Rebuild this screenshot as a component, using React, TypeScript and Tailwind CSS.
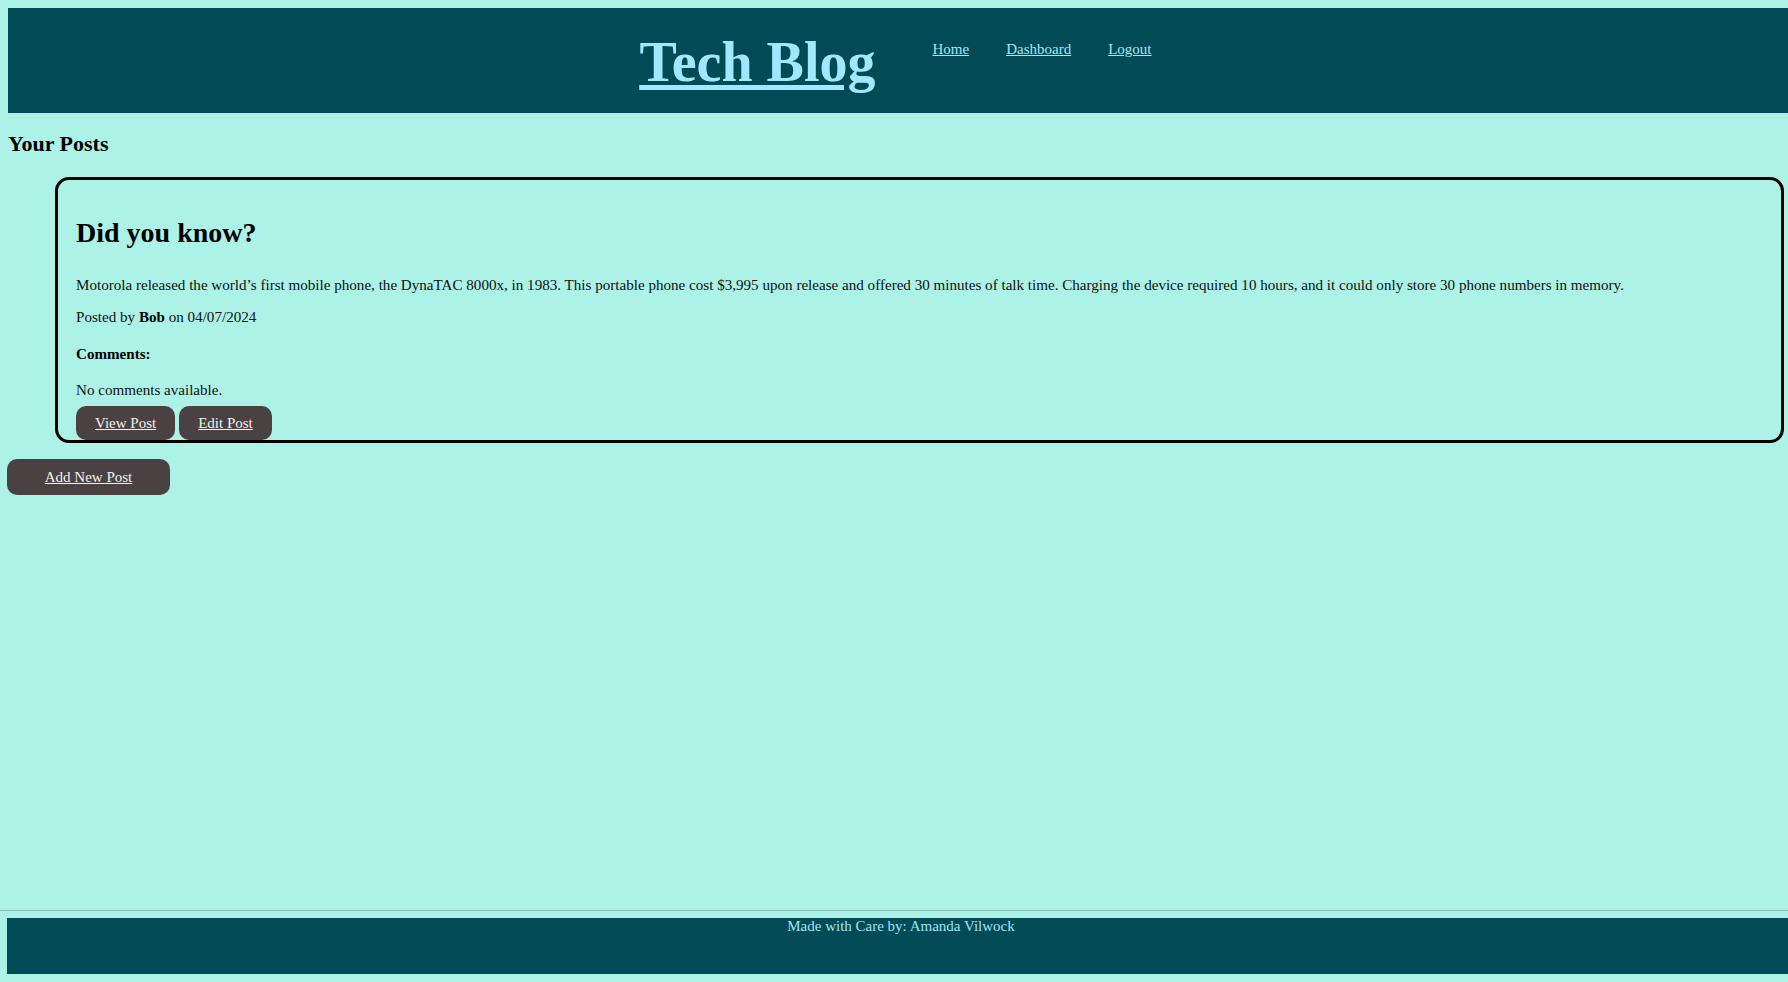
import React from "react";

export default function App() {
  return (
    <div className="min-h-[982px] bg-[#acf2e7] flex flex-col font-['Liberation_Serif','Times_New_Roman',serif] text-black">
      <header className="ml-[8px] mt-[8px] h-[105px] bg-[#024a56] flex justify-center items-start">
        <div className="flex items-start mr-[5px]">
          <h1 className="mt-[22px] text-[56px] leading-[64px] font-bold underline text-[#a0e9fc] decoration-[5px] underline-offset-[4px]">
            <a href="#">Tech Blog</a>
          </h1>
          <nav className="ml-[57px] mt-[33px] flex gap-[37px] text-[15px] leading-[17px] text-[#a6e8f6]">
            <a href="#" className="underline">Home</a>
            <a href="#" className="underline">Dashboard</a>
            <a href="#" className="underline">Logout</a>
          </nav>
        </div>
      </header>

      <h3 className="ml-[8px] mt-[18px] text-[22px] leading-[25px] font-bold">Your Posts</h3>

      <div className="ml-[55px] mr-[4px] mt-[21px] border-[3px] border-black rounded-[14px] pl-[18px] pr-[18px] pt-[37px]">
        <h2 className="text-[28px] leading-[32px] font-bold">Did you know?</h2>
        <p className="mt-[28px] text-[15.1px] leading-[17px] text-[#111]">
          Motorola released the world’s first mobile phone, the DynaTAC 8000x, in 1983. This portable phone cost $3,995 upon release and offered 30 minutes of talk time. Charging the device required 10 hours, and it could only store 30 phone numbers in memory.
        </p>
        <p className="mt-[15px] text-[15.1px] leading-[17px] text-[#111]">
          Posted by <b className="text-black">Bob</b> on 04/07/2024
        </p>
        <p className="mt-[20px] text-[15.1px] leading-[17px] font-bold">Comments:</p>
        <p className="mt-[19px] text-[15.1px] leading-[17px] text-[#111]">No comments available.</p>
        <div className="mt-[7px] flex gap-[4px]">
          <a href="#" className="h-[34px] px-[19px] flex items-center rounded-[10px] bg-[#4a4242] text-[#f4f0f0] text-[15px] underline">View Post</a>
          <a href="#" className="h-[34px] px-[19px] flex items-center rounded-[10px] bg-[#4a4242] text-[#f4f0f0] text-[15px] underline">Edit Post</a>
        </div>
      </div>

      <div className="ml-[7px] mt-[16px]">
        <a href="#" className="inline-flex w-[163px] h-[36px] items-center justify-center rounded-[10px] bg-[#4a4242] text-[#f4f0f0] text-[15px] underline">Add New Post</a>
      </div>

      <div className="flex-1" />

      <div className="border-t border-[#8bbab3]" />
      <footer className="ml-[7px] mt-[7px] mb-[8px] h-[56px] pl-[7px] bg-[#024a56] text-center text-[15px] leading-[17px] text-[#9fe6f4]">
        Made with Care by: Amanda Vilwock
      </footer>
    </div>
  );
}
